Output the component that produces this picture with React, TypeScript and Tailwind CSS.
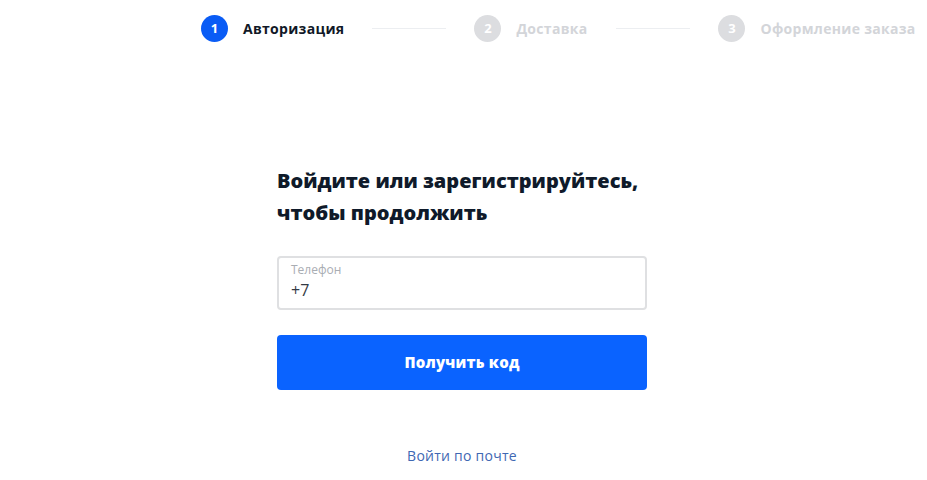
import React from "react";

const font = { fontFamily: "'Open Sans', 'Noto Sans', sans-serif" };

function Step({ n, label, active }: { n: number; label: string; active?: boolean }) {
  return (
    <div className="flex items-center gap-[15px]">
      <div
        className={
          "w-[27px] h-[27px] rounded-full flex items-center justify-center text-[13px] font-bold text-white " +
          (active ? "bg-[#0a5cf5]" : "bg-[#dcdde0]")
        }
      >
        {n}
      </div>
      <span
        className={
          "text-[14px] font-bold tracking-[0.3px] " + (active ? "text-[#111827]" : "text-[#d3d5d9]")
        }
      >
        {label}
      </span>
    </div>
  );
}

export default function App() {
  return (
    <div className="w-[927px] h-[480px] bg-white overflow-hidden" style={font}>
      {/* Steps */}
      <div className="flex items-center pl-[201px] pt-[15px] h-[42px]">
        <Step n={1} label="Авторизация" active />
        <div className="w-[74px] h-px bg-[#eceef1] ml-[28px] mr-[28px]" />
        <Step n={2} label="Доставка" />
        <div className="w-[74px] h-px bg-[#eceef1] ml-[29px] mr-[28px]" />
        <Step n={3} label="Оформление заказа" />
      </div>

      {/* Form */}
      <div className="w-[370px] ml-[277px] mt-[123px]">
        <h1 className="text-[20px] leading-[32px] font-extrabold text-[#0f1a2a]">
          Войдите или зарегистрируйтесь,
          <br />
          чтобы продолжить
        </h1>

        <div className="mt-[27px] h-[54px] border-2 border-[#dfe0e2] rounded-[4px] px-[12px] pt-[5px]">
          <div className="text-[12px] leading-[14px] text-[#a9adb3]">Телефон</div>
          <div className="text-[16px] leading-[22px] text-[#333a44] mt-[2px]">+7</div>
        </div>

        <button className="mt-[25px] w-full h-[55px] rounded-[4px] bg-[#0a63ff] text-white text-[15px] font-extrabold tracking-[0.2px]">
          Получить код
        </button>

        <div className="mt-[55px] text-center text-[14px] tracking-[0.25px] text-[#3f68b3]">Войти по почте</div>
      </div>
    </div>
  );
}
